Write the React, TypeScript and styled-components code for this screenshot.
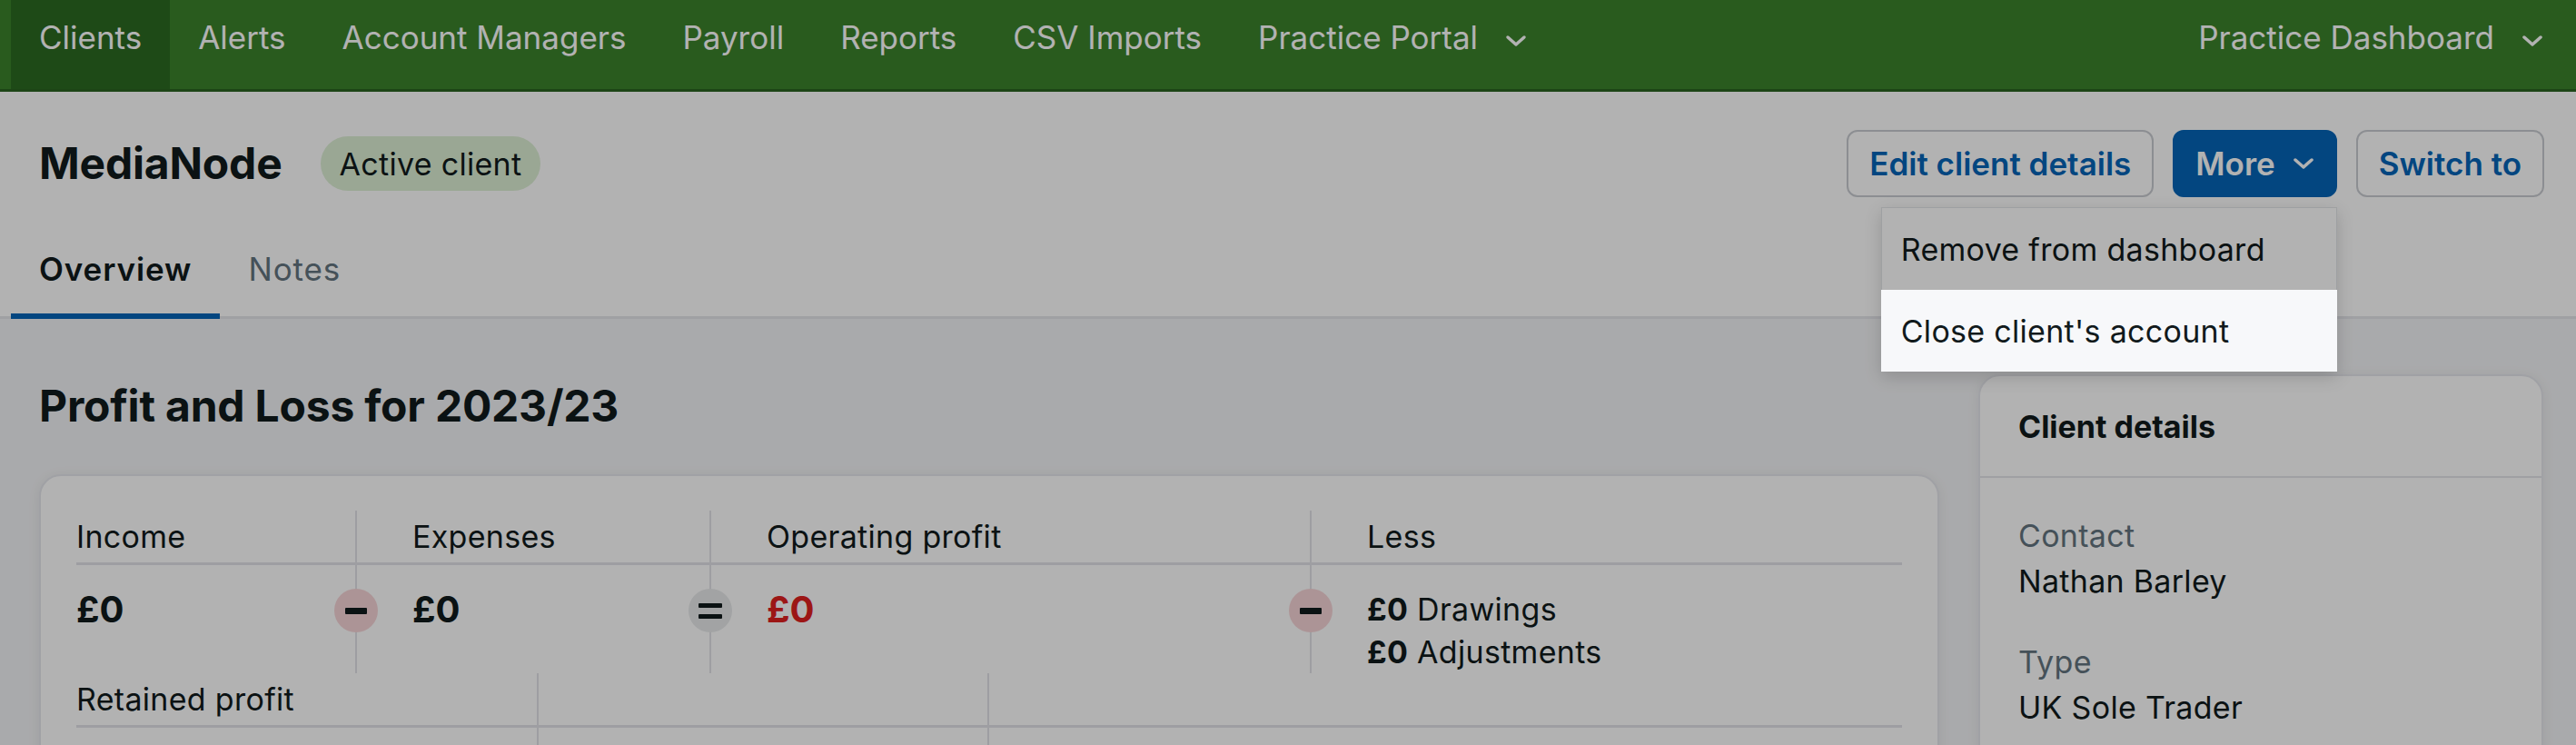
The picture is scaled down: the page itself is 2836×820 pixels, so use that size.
import styled, { createGlobalStyle } from "styled-components";

const GlobalStyle = createGlobalStyle`
  body {
    margin: 0;
    font-family: Inter, "Noto Sans", sans-serif;
    background: #f3f4f6;
    color: #111a1c;
  }
  * { box-sizing: border-box; }
`;

const TopNav = styled.nav`
  display: flex;
  align-items: stretch;
  height: 101px;
  padding: 0 5px 0 12px;
  background: #3b832c;
  border-bottom: 3px solid #2a6320;
`;

const NavItem = styled.a<{ $active?: boolean; $right?: boolean }>`
  display: flex;
  align-items: flex-start;
  gap: 30px;
  padding: 19px 31px 0;
  font-size: 35px;
  line-height: 44px;
  color: #fff;
  text-decoration: none;
  white-space: nowrap;
  background: ${(p) => (p.$active ? "#2c6b21" : "transparent")};
  margin-left: ${(p) => (p.$right ? "auto" : "0")};

  svg {
    margin-top: 19px;
  }
`;

const Chevron = ({ color = "#fff" }: { color?: string }) => (
  <svg width="24" height="14" viewBox="0 0 24 14" fill="none">
    <polyline
      points="3,3 12,11 21,3"
      stroke={color}
      strokeWidth="3.5"
      strokeLinecap="round"
      strokeLinejoin="round"
    />
  </svg>
);

const ClientHeader = styled.header`
  background: #fff;
`;

const HeaderRow = styled.div`
  display: flex;
  align-items: center;
  height: 116px;
  padding: 42px 35px 0 43px;
`;

const ClientName = styled.h1`
  margin: 0;
  font-size: 48px;
  font-weight: 700;
  line-height: 1;
  letter-spacing: -0.2px;
`;

const StatusPill = styled.span`
  display: inline-flex;
  align-items: center;
  height: 60px;
  margin-left: 42px;
  padding: 0 21px;
  border-radius: 30px;
  background: #ddefd5;
  font-size: 34px;
  letter-spacing: 0.3px;
`;

const Actions = styled.div`
  display: flex;
  gap: 21px;
  margin-left: auto;
`;

const Button = styled.button<{ $primary?: boolean }>`
  display: flex;
  align-items: center;
  gap: 19px;
  height: 74px;
  padding: 0 23px;
  border-radius: 12px;
  border: 2px solid ${(p) => (p.$primary ? "#0565b8" : "#c9ccd1")};
  background: ${(p) => (p.$primary ? "#0565b8" : "#fff")};
  color: ${(p) => (p.$primary ? "#fff" : "#0565b8")};
  font-family: inherit;
  font-size: 35px;
  font-weight: 600;
  white-space: nowrap;
`;

const MoreWrap = styled.div`
  position: relative;
`;

const Dropdown = styled.ul`
  position: absolute;
  top: calc(100% + 11px);
  right: 0;
  width: 502px;
  margin: 0;
  padding: 0;
  list-style: none;
  background: #fff;
  border: 1px solid #e3e5e8;
  box-shadow: 0 6px 18px rgba(0, 0, 0, 0.16);
`;

const MenuItem = styled.li<{ $spotlight?: boolean }>`
  display: flex;
  align-items: center;
  height: 90px;
  padding: 0 21px;
  font-size: 34px;
  letter-spacing: 0.3px;
  white-space: nowrap;
  background: ${(p) => (p.$spotlight ? "#f7f8fa" : "#fff")};
  ${(p) =>
    p.$spotlight &&
    `
    position: relative;
    z-index: 20;
    margin: 0 -1px -1px;
    padding-left: 22px;
  `}
`;

const Tabs = styled.div`
  display: flex;
  margin-top: 30px;
  padding-left: 12px;
  border-bottom: 3px solid #e4e5ea;
`;

const Tab = styled.a<{ $active?: boolean }>`
  display: flex;
  align-items: center;
  height: 104px;
  margin-bottom: -3px;
  padding: 0 31px;
  font-size: 35px;
  letter-spacing: 0.9px;
  font-weight: ${(p) => (p.$active ? 600 : 400)};
  color: ${(p) => (p.$active ? "#111a1c" : "#647580")};
  border-bottom: 6px solid ${(p) => (p.$active ? "#0565b8" : "transparent")};
`;

const Content = styled.main`
  display: grid;
  grid-template-columns: 1fr 622px;
  gap: 43px;
  align-items: start;
  padding: 61px 36px 40px 43px;
`;

const Title = styled.h2`
  margin: 0 0 40px;
  font-size: 48px;
  font-weight: 700;
  line-height: 70px;
  letter-spacing: -0.2px;
`;

const Card = styled.section`
  background: #fff;
  border: 2px solid #e6e7ec;
  border-radius: 24px;
  box-shadow: 0 2px 14px rgba(16, 24, 40, 0.07);
`;

const PnLCard = styled(Card)`
  padding: 38px 39px 40px;
`;

const SummaryGrid = styled.div<{ $cols: string }>`
  display: grid;
  grid-template-columns: ${(p) => p.$cols};
`;

const LabelCell = styled.div<{ $first?: boolean }>`
  display: flex;
  align-items: center;
  height: 60px;
  padding-left: ${(p) => (p.$first ? "0" : "61px")};
  border-left: ${(p) => (p.$first ? "none" : "2px solid #e2e3e8")};
  border-bottom: 3px solid #e2e3e8;
  font-size: 34px;
  letter-spacing: 0.3px;
`;

const ValueCell = styled.div<{ $first?: boolean }>`
  position: relative;
  min-height: 119px;
  padding: 25px 0 0 ${(p) => (p.$first ? "0" : "61px")};
  border-left: ${(p) => (p.$first ? "none" : "2px solid #e2e3e8")};
`;

const Amount = styled.div<{ $negative?: boolean }>`
  font-size: 40px;
  font-weight: 700;
  line-height: 48px;
  color: ${(p) => (p.$negative ? "#e0201f" : "#111a1c")};
`;

const LessLine = styled.div`
  font-size: 34px;
  line-height: 47px;
  letter-spacing: 0.3px;

  b {
    font-weight: 700;
  }
`;

const Op = styled.span<{ $tone: string }>`
  position: absolute;
  left: -25px;
  top: 26px;
  display: flex;
  flex-direction: column;
  align-items: center;
  justify-content: center;
  gap: 7px;
  width: 48px;
  height: 48px;
  border-radius: 50%;
  background: ${(p) => p.$tone};
`;

const Bar = styled.span<{ $h: number; $w: number }>`
  display: block;
  width: ${(p) => p.$w}px;
  height: ${(p) => p.$h}px;
  border-radius: 1px;
  background: #111a1c;
`;

const Minus = () => (
  <Op $tone="#f7d5d7">
    <Bar $w={24} $h={7} />
  </Op>
);

const Equals = () => (
  <Op $tone="#e8eaeb">
    <Bar $w={26} $h={5} />
    <Bar $w={26} $h={5} />
  </Op>
);

const DetailsHeader = styled.div`
  display: flex;
  align-items: center;
  height: 112px;
  padding: 0 42px;
  border-bottom: 2px solid #e4e5ea;
  font-size: 34px;
  font-weight: 700;
`;

const DetailsBody = styled.div`
  padding: 39px 42px 40px;
`;

const Field = styled.div`
  & + & {
    margin-top: 39px;
  }
`;

const FieldLabel = styled.div`
  font-size: 34px;
  line-height: 50px;
  letter-spacing: 0.3px;
  color: #647580;
`;

const FieldValue = styled.div`
  font-size: 34px;
  line-height: 50px;
  letter-spacing: 0.3px;
`;

const Overlay = styled.div`
  position: fixed;
  inset: 0;
  z-index: 10;
  background: rgba(0, 0, 0, 0.3);
  pointer-events: none;
`;

const navLinks = ["Alerts", "Account Managers", "Payroll", "Reports", "CSV Imports"];

export default function App() {
  return (
    <>
      <GlobalStyle />
      <TopNav>
        <NavItem $active>Clients</NavItem>
        {navLinks.map((l) => (
          <NavItem key={l}>{l}</NavItem>
        ))}
        <NavItem>
          Practice Portal
          <Chevron />
        </NavItem>
        <NavItem $right>
          Practice Dashboard
          <Chevron />
        </NavItem>
      </TopNav>

      <ClientHeader>
        <HeaderRow>
          <ClientName>MediaNode</ClientName>
          <StatusPill>Active client</StatusPill>
          <Actions>
            <Button>Edit client details</Button>
            <MoreWrap>
              <Button $primary>
                More
                <Chevron />
              </Button>
              <Dropdown>
                <MenuItem>Remove from dashboard</MenuItem>
                <MenuItem $spotlight>Close client's account</MenuItem>
              </Dropdown>
            </MoreWrap>
            <Button>Switch to</Button>
          </Actions>
        </HeaderRow>
        <Tabs>
          <Tab $active>Overview</Tab>
          <Tab>Notes</Tab>
        </Tabs>
      </ClientHeader>

      <Content>
        <div>
          <Title>Profit and Loss for 2023/23</Title>
          <PnLCard>
            <SummaryGrid $cols="307px 390px 661px 1fr">
              <LabelCell $first>Income</LabelCell>
              <LabelCell>Expenses</LabelCell>
              <LabelCell>Operating profit</LabelCell>
              <LabelCell>Less</LabelCell>
              <ValueCell $first>
                <Amount>£0</Amount>
              </ValueCell>
              <ValueCell>
                <Minus />
                <Amount>£0</Amount>
              </ValueCell>
              <ValueCell>
                <Equals />
                <Amount $negative>£0</Amount>
              </ValueCell>
              <ValueCell>
                <Minus />
                <LessLine>
                  <b>£0</b> Drawings
                </LessLine>
                <LessLine>
                  <b>£0</b> Adjustments
                </LessLine>
              </ValueCell>
            </SummaryGrid>
            <SummaryGrid $cols="507px 496px 1fr">
              <LabelCell $first>Retained profit</LabelCell>
              <LabelCell />
              <LabelCell />
              <ValueCell $first />
              <ValueCell />
              <ValueCell />
            </SummaryGrid>
          </PnLCard>
        </div>

        <Card>
          <DetailsHeader>Client details</DetailsHeader>
          <DetailsBody>
            <Field>
              <FieldLabel>Contact</FieldLabel>
              <FieldValue>Nathan Barley</FieldValue>
            </Field>
            <Field>
              <FieldLabel>Type</FieldLabel>
              <FieldValue>UK Sole Trader</FieldValue>
            </Field>
          </DetailsBody>
        </Card>
      </Content>

      <Overlay />
    </>
  );
}
